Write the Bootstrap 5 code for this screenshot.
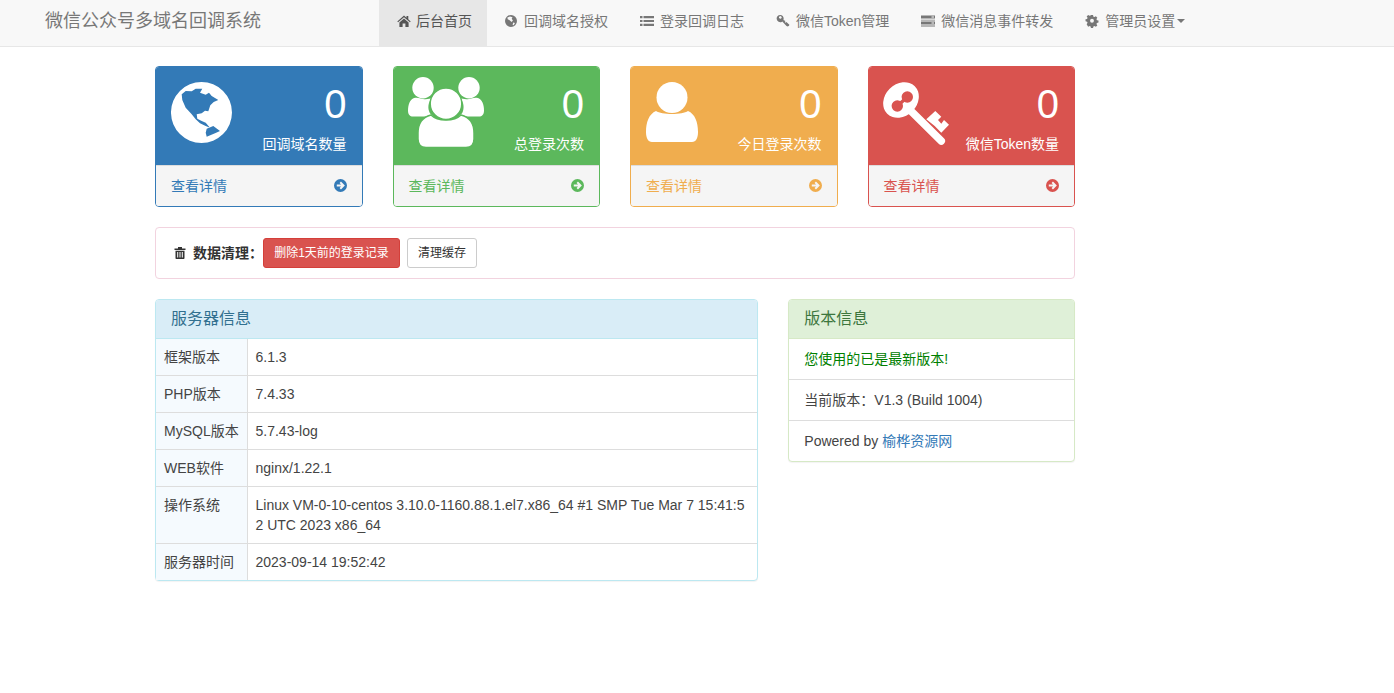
<!DOCTYPE html>
<html lang="zh-CN">
<head>
<meta charset="utf-8">
<title>微信公众号多域名回调系统</title>
<link rel="stylesheet" href="https://cdn.jsdelivr.net/npm/bootstrap@5.3.0/dist/css/bootstrap.min.css">
<style>
:root{--bs-body-font-family:"Liberation Sans","Noto Sans CJK SC",sans-serif;}
body{font-family:"Liberation Sans","Noto Sans CJK SC",sans-serif;font-size:14px;line-height:20px;color:#333;background:#fff;}
.topbar{height:47px;background:#f8f8f8;border-bottom:1px solid #e7e7e7;padding:0;flex-wrap:nowrap;justify-content:flex-start;align-items:stretch;}
.topbar .navbar-brand{width:379px;margin:0;padding:0 0 0 45px;height:42px;line-height:42px;font-size:18px;color:#777;}
.topnav{flex-direction:row;}
.topnav .nav-link{height:46px;padding:0 15px 5px 18px;line-height:20px;color:#777;font-size:14px;display:flex;align-items:center;gap:5px;white-space:nowrap;}
.topnav .nav-link.active{background:#e7e7e7;color:#555;}
.topnav .nav-link svg{width:14px;height:14px;fill:currentColor;flex:none;margin-left:-1px;margin-right:1px;}
.topnav .nav-link.active svg{margin-left:0;margin-right:0;}
.topnav .caretmark{width:0;height:0;border-top:4px solid #777;border-left:4px solid transparent;border-right:4px solid transparent;margin-left:-3px;}
.shell{width:950px;margin:19px 0 0 140px;padding:0;}
.shell .row{--bs-gutter-x:30px;--bs-gutter-y:0;margin-left:0;margin-right:0;}
.stat{border-radius:4px;margin-bottom:20px;overflow:hidden;background:#fff;}
.stat-top{height:98px;padding:15px;color:#fff;position:relative;}
.stat-top svg{fill:#fff;display:block;}
.stat-top .icon-group{margin:-5px 0 0 -1px;}
.stat-top .icon-key{margin-left:-1px;}
.stat-num{font-size:40px;line-height:44px;}
.stat-label{line-height:20px;margin-top:8px;}
.stat-text{text-align:right;position:absolute;right:15px;top:15px;}
.stat-foot{height:41px;background:#f5f5f5;border-top:1px solid #ddd;padding:0 15px 1px;display:flex;justify-content:space-between;align-items:center;text-decoration:none;}
.stat-foot svg{width:13px;height:13px;fill:currentColor;}
.tone-blue{border:1px solid #337ab7;}.tone-blue .stat-top{background:#337ab7;}.tone-blue .stat-foot{color:#337ab7;}
.tone-green{border:1px solid #5cb85c;}.tone-green .stat-top{background:#5cb85c;}.tone-green .stat-foot{color:#5cb85c;}
.tone-amber{border:1px solid #f0ad4e;}.tone-amber .stat-top{background:#f0ad4e;}.tone-amber .stat-foot{color:#f0ad4e;}
.tone-red{border:1px solid #d9534f;}.tone-red .stat-top{background:#d9534f;}.tone-red .stat-foot{color:#d9534f;}
.cleanbox{height:52px;border:1px solid #f2d3df;border-radius:4px;margin:0 15px 20px;padding:10px 18px;display:flex;align-items:center;background:#fff;}
.cleanbox svg{width:12px;height:12px;fill:#333;margin-right:7px;}
.cleanbox strong{font-weight:700;}
.tinybtn{font-size:12px;line-height:18px;padding:5px 10px;border-radius:3px;border:1px solid;}
.tinybtn-red{background:#d9534f;border-color:#d43f3a;color:#fff;margin-right:7px;min-width:137px;}
.tinybtn-plain{background:#fff;border-color:#ccc;color:#333;}
.infobox{border-radius:4px;margin-bottom:20px;box-shadow:0 1px 1px rgba(0,0,0,.05);}
.infobox .card-header{height:39px;padding:10px 15px;font-size:16px;line-height:18px;border-radius:3px 3px 0 0;}
.box-info{border:1px solid #bce8f1;}
.box-info .card-header{background:#d9edf7;border-bottom:1px solid #bce8f1;color:#31708f;}
.box-ok{border:1px solid #d6e9c6;}
.box-ok .card-header{background:#dff0d8;border-bottom:1px solid #d6e9c6;color:#3c763d;}
.infotable{margin:0;table-layout:fixed;--bs-table-border-color:#ddd;color:#444;}
.infotable th,.infotable td{padding:8px;line-height:20px;font-size:14px;font-weight:400;border-bottom:0;border-top:1px solid #ddd;word-break:break-all;color:#444;}
.infotable tr:first-child th,.infotable tr:first-child td{border-top:0;}
.infotable th{width:91px;background:#f5fafe;border-right:1px solid #ddd;white-space:nowrap;}
.infolist .list-group-item{height:41px;padding:10px 15px;border-color:#ddd;color:#444;font-size:14px;line-height:20px;}
.infolist .list-group-item:last-child{height:40px;}
.infolist .list-group-item.okmsg{color:#008000;}
.infolist a{color:#337ab7;text-decoration:none;}
</style>
</head>
<body>
<nav class="navbar topbar">
  <a class="navbar-brand" href="#">微信公众号多域名回调系统</a>
  <ul class="navbar-nav topnav">
    <li class="nav-item"><a class="nav-link active" href="#"><svg viewBox="0 0 14 14"><path d="M7 1.500 0.300 7.400l.8.9L7 3.200l5.900 5.100.8-.9-2.400-2.100V2h-1.800v1.700zM2.400 8.600V13h3.200V9.600h2.800V13h3.200V8.600L7 4.600z"/></svg>后台首页</a></li>
    <li class="nav-item"><a class="nav-link" href="#"><svg viewBox="0 0 14 14"><path fill-rule="evenodd" d="M7 1a6 6 0 1 0 0 12A6 6 0 0 0 7 1zM3.400 3.400 6 2.600l2.500.6-.8 1.600 1.200 1.600L7.600 8 5.600 6.200 3.700 5.200zM9.200 8.600l1.800.3-1.400 2.300-1-.2z"/></svg>回调域名授权</a></li>
    <li class="nav-item"><a class="nav-link" href="#"><svg viewBox="0 0 14 14"><path d="M0 2h2.500v2.200H0zM3.500 2H14v2.200H3.500zM0 5.900h2.500v2.200H0zM3.500 5.900H14v2.200H3.500zM0 9.800h2.500V12H0zM3.500 9.800H14V12H3.500z"/></svg>登录回调日志</a></li>
    <li class="nav-item"><a class="nav-link" href="#"><svg viewBox="0 0 14 14"><path fill-rule="evenodd" d="M4.200 1a3.600 3.600 0 1 0 1.500 6.900l.6-.3L10.500 12l1.200.6 1.300-.8.400-1-3-2.900-.8.800-.8-.8.700-.8L7.400 5.900l.3-1C7.700 2.600 6.300 1 4.200 1zM3.200 2.700a1.300 1.300 0 1 1 1.800 1.800 1.300 1.300 0 0 1-1.800-1.800z"/></svg>微信Token管理</a></li>
    <li class="nav-item"><a class="nav-link" href="#"><svg viewBox="0 0 14 14"><path d="M0 1.500h14v3H0zM0 5.700h14v.9H0zM0 7.500h14v3H0zM0 11.500h14v1H0z"/><path fill="#f8f8f8" d="M10.500 2.500h2.500v1h-2.500zM10.500 8.500h2.500v1h-2.500z"/></svg>微信消息事件转发</a></li>
    <li class="nav-item"><a class="nav-link" href="#"><svg viewBox="-1 -1 16 16"><path fill-rule="evenodd" d="M5.800 0.200h2.400l.4 1.800 1.200.5 1.600-1 1.700 1.700-1 1.600.5 1.200 1.800.4v2.400l-1.800.4-.5 1.200 1 1.600-1.700 1.700-1.600-1-1.200.5-.4 1.800H5.800l-.4-1.800-1.200-.5-1.600 1L.9 10.600l1-1.600-.5-1.200L-.4 7.400V5l1.800-.4.500-1.200-1-1.600L2.600.1l1.600 1 1.200-.5zM7 4.500a2.200 2.200 0 1 0 0 4.400 2.200 2.200 0 0 0 0-4.400z"/></svg>管理员设置<span class="caretmark"></span></a></li>
  </ul>
</nav>

<div class="shell">
  <div class="row">
    <div class="col-3">
      <div class="stat tone-blue">
        <div class="stat-top">
          <svg width="61" height="61" viewBox="0 0 61 61"><path fill-rule="evenodd" d="M30.500 0a30.500 30.500 0 1 0 0 61 30.500 30.500 0 0 0 0-61zM10.700 12.300 14.700 9 20.700 9.300 24.700 6.700 31.300 6.700 29 10.700 34.700 12.700 38 10.700 40.700 14 47.300 18 42.700 20 39.300 23.300 37.300 29.300 34 28.700 30.700 31.300 25.700 32.300 26.300 36.700 30.700 39 34.700 40.700 39 45.700 34.700 44 29 41.300 24.700 37.300 20.700 32.300 14.700 25.700 11.300 18zM35.700 46.700 42.300 44 49 49 44 51.300 35.700 54.700 34.700 50.700z"/></svg>
          <div class="stat-text"><div class="stat-num">0</div><div class="stat-label">回调域名数量</div></div>
        </div>
        <a class="stat-foot" href="#"><span>查看详情</span><svg viewBox="0 0 14 14"><path fill-rule="evenodd" d="M7 0a7 7 0 1 0 0 14A7 7 0 0 0 7 0zM7.500 2.800 11.700 7l-4.200 4.200-1.500-1.500 1.600-1.600H3V5.900h4.600L6 4.300z"/></svg></a>
      </div>
    </div>
    <div class="col-3">
      <div class="stat tone-green">
        <div class="stat-top">
          <svg class="icon-group" width="76" height="71" viewBox="0 0 76 71"><circle cx="15" cy="10.700" r="10.700"/><circle cx="61" cy="10.700" r="10.700"/><path d="M6 21c4-1 6 .5 9 1 3 .5 7 0 9-1-3 3-4.500 8-3 13 .8 2.500 2 3.500 4 5-3 0-6 0-9 .5H5c-3 0-5-2-5-6 0-6 2-11 6-12.500z"/><path d="M70 21c-4-1-6 .5-9 1-3 .5-7 0-9-1 3 3 4.500 8 3 13-.8 2.500-2 3.500-4 5 3 0 6 0 9 .5h11c3 0 5-2 5-6 0-6-2-11-6-12.500z"/><path stroke="#5cb85c" stroke-width="1.500" d="M10 56c0-10 5-16 13-18 3 3 9 5 15 5s12-2 15-5c8 2 13 8 13 18v6c0 5-3 8.500-8 8.500H18c-5 0-8-3.500-8-8.500z"/><circle cx="38" cy="26.700" r="15.800" stroke="#5cb85c" stroke-width="1.500"/></svg>
          <div class="stat-text"><div class="stat-num">0</div><div class="stat-label">总登录次数</div></div>
        </div>
        <a class="stat-foot" href="#"><span>查看详情</span><svg viewBox="0 0 14 14"><path fill-rule="evenodd" d="M7 0a7 7 0 1 0 0 14A7 7 0 0 0 7 0zM7.500 2.800 11.700 7l-4.200 4.200-1.500-1.500 1.600-1.600H3V5.900h4.600L6 4.300z"/></svg></a>
      </div>
    </div>
    <div class="col-3">
      <div class="stat tone-amber">
        <div class="stat-top">
          <svg width="52" height="61" viewBox="0 0 52 61"><circle cx="26" cy="15.500" r="15.500"/><path d="M0 50c0-10 3-18 10-21 3 2 9 3 16 3s13-1 16-3c7 3 10 11 10 21 0 6-2 10-6 10H6c-4 0-6-4-6-10z"/></svg>
          <div class="stat-text"><div class="stat-num">0</div><div class="stat-label">今日登录次数</div></div>
        </div>
        <a class="stat-foot" href="#"><span>查看详情</span><svg viewBox="0 0 14 14"><path fill-rule="evenodd" d="M7 0a7 7 0 1 0 0 14A7 7 0 0 0 7 0zM7.500 2.800 11.700 7l-4.200 4.200-1.500-1.500 1.600-1.600H3V5.900h4.600L6 4.300z"/></svg></a>
      </div>
    </div>
    <div class="col-3">
      <div class="stat tone-red">
        <div class="stat-top">
          <svg class="icon-key" width="67" height="65" viewBox="0 0 67 65"><ellipse cx="18" cy="18" rx="19.500" ry="16" transform="rotate(-45 18 18)"/><path fill="none" stroke="#d9534f" stroke-width="3.500" d="M14.300 24 24.300 15"/><circle cx="24.300" cy="15" r="5.700" fill="#d9534f"/><circle cx="14.300" cy="24" r="5.700" fill="#d9534f"/><path fill="none" stroke="#fff" stroke-width="7.500" stroke-linecap="round" d="M28 29 58.300 59"/><path d="M43.300 37.300 52.300 29 58.300 34.700 55 38 58.300 41.700 61 38 66 42.700 58.300 50.700 51.700 44z"/></svg>
          <div class="stat-text"><div class="stat-num">0</div><div class="stat-label">微信Token数量</div></div>
        </div>
        <a class="stat-foot" href="#"><span>查看详情</span><svg viewBox="0 0 14 14"><path fill-rule="evenodd" d="M7 0a7 7 0 1 0 0 14A7 7 0 0 0 7 0zM7.500 2.800 11.700 7l-4.200 4.200-1.500-1.500 1.600-1.600H3V5.900h4.600L6 4.300z"/></svg></a>
      </div>
    </div>
  </div>

  <div class="cleanbox">
    <svg viewBox="0 0 12 12"><path fill-rule="evenodd" d="M4 0h4v1.500h3.500v1.500h-11V1.500H4zM1.500 3.800h9V11c0 .6-.4 1-1 1h-7c-.6 0-1-.4-1-1zM3.200 5v5.500h1V5zM5.500 5v5.500h1V5zM7.800 5v5.500h1V5z"/></svg>
    <strong>数据清理：</strong>
    <button type="button" class="btn tinybtn tinybtn-red">删除1天前的登录记录</button>
    <button type="button" class="btn tinybtn tinybtn-plain">清理缓存</button>
  </div>

  <div class="row">
    <div class="col-8">
      <div class="card infobox box-info">
        <div class="card-header">服务器信息</div>
        <table class="table infotable">
          <tbody>
            <tr><th>框架版本</th><td>6.1.3</td></tr>
            <tr><th>PHP版本</th><td>7.4.33</td></tr>
            <tr><th>MySQL版本</th><td>5.7.43-log</td></tr>
            <tr><th>WEB软件</th><td>nginx/1.22.1</td></tr>
            <tr><th>操作系统</th><td>Linux VM-0-10-centos 3.10.0-1160.88.1.el7.x86_64 #1 SMP Tue Mar 7 15:41:52 UTC 2023 x86_64</td></tr>
            <tr><th>服务器时间</th><td>2023-09-14 19:52:42</td></tr>
          </tbody>
        </table>
      </div>
    </div>
    <div class="col-4">
      <div class="card infobox box-ok">
        <div class="card-header">版本信息</div>
        <ul class="list-group list-group-flush infolist">
          <li class="list-group-item okmsg">您使用的已是最新版本!</li>
          <li class="list-group-item">当前版本：V1.3 (Build 1004)</li>
          <li class="list-group-item">Powered by <a href="#">榆桦资源网</a></li>
        </ul>
      </div>
    </div>
  </div>
</div>
<script src="https://cdn.jsdelivr.net/npm/bootstrap@5.3.0/dist/js/bootstrap.bundle.min.js"></script>
</body>
</html>
